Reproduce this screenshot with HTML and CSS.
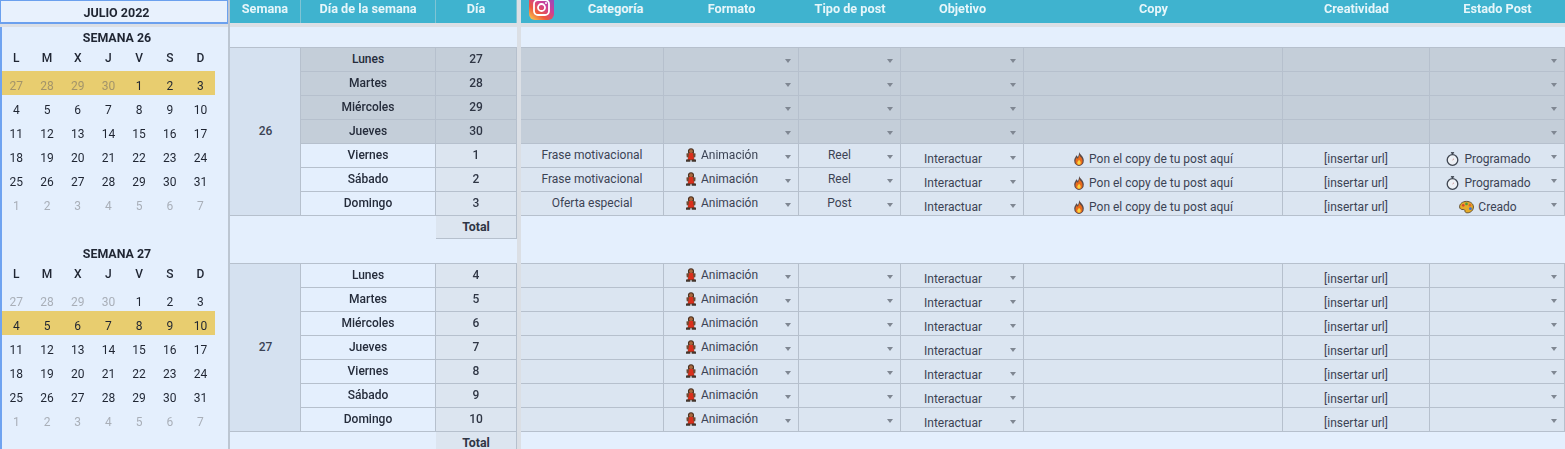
FILE: index.html
```html
<!DOCTYPE html>
<html lang="es">
<head>
<meta charset="utf-8">
<title>Calendario de contenidos</title>
<link rel="stylesheet" href="styles.css">
</head>
<body>
<svg class="defs" width="0" height="0" aria-hidden="true">
  <defs>
    <linearGradient id="ig" x1="0.1" y1="1" x2="0.9" y2="0">
      <stop offset="0" stop-color="#f9c64f"/><stop offset="0.3" stop-color="#ee5a3c"/><stop offset="0.6" stop-color="#cf3f96"/><stop offset="1" stop-color="#8a4fc4"/>
    </linearGradient>
    <symbol id="dancer" viewBox="0 0 12 14">
      <path d="M3 4.200C2.500 1.500 4 .3 6 .3s3.500 1.200 3 3.900l-.2 1.300H3.200z" fill="#4b3020"/>
      <circle cx="6" cy="3.200" r="1.900" fill="#a9693f"/>
      <path d="M1.400 5.600L4 4.900h4l2.600.7-.3 3.600-1.500.2.900 2.800H2.300l.9-2.800-1.500-.2z" fill="#6e4a32"/>
      <path d="M4.100 5.100h3.800l.5 3.300 1 3.400H2.600l1-3.400z" fill="#d92f1c"/>
      <path d="M1 11.400h4.300v2.300H1zM6.700 11.400H11v2.300H6.700z" fill="#43352c"/>
    </symbol>
    <symbol id="fire" viewBox="1 0.300 10 13.400">
      <path d="M6 .4c.6 2.200 4.600 4 4.600 8.100A4.600 5 0 0 1 6 13.600a4.600 5 0 0 1-4.600-5.100C1.400 6 3 5 3.400 3.300c.9.500 1.400 1.200 1.500 2C5.700 4 6.200 2.300 6 .4z" fill="#5a4a48"/>
      <path d="M6 3c.6 1.700 3.400 3 3.400 5.800A3.400 3.800 0 0 1 6 12.700a3.400 3.800 0 0 1-3.400-3.900C2.600 7.400 3.400 6.500 3.800 5.500c.5.500.9 1 1 1.600C5.500 6 6.100 4.500 6 3z" fill="#ea6a1c"/>
      <path d="M6 7.600c.5.800 1.700 1.500 1.700 2.900A1.700 2 0 0 1 6 12.500a1.700 2 0 0 1-1.700-2c0-1.200 1.300-1.700 1.700-2.900z" fill="#fbd33f"/>
    </symbol>
    <symbol id="watch" viewBox="0 0 14 14">
      <path d="M5.400.8h3.200" stroke="#3f4651" stroke-width="1.400" fill="none"/>
      <path d="M7 1v2" stroke="#3f4651" stroke-width="1.200" fill="none"/>
      <circle cx="7" cy="8" r="5.300" fill="#eef1f5" stroke="#3f4651" stroke-width="1.300"/>
      <path d="M7 8l1.500-1.200" stroke="#c98a8a" stroke-width="0.900" fill="none"/>
    </symbol>
    <symbol id="palette" viewBox="0 0 16 14">
      <path d="M8 1C3.800 1 .6 3.600.6 6.800c0 2.300 2 3.100 3.800 2.900 1.300-.1 1.900.4 1.900 1.400 0 1.300 1 2.100 2.400 2.100 4 0 6.700-2.800 6.700-6.200C15.400 3.500 12.200 1 8 1z" fill="#e5ab28" stroke="#4f3f22" stroke-width="0.900"/>
      <circle cx="4.500" cy="5.200" r="1.400" fill="#d8472b"/>
      <circle cx="8" cy="3.700" r="1.400" fill="#4c9a3f"/>
      <circle cx="11.700" cy="5" r="1.400" fill="#e06a2a"/>
      <circle cx="12.200" cy="8.800" r="1.500" fill="#3f6fc4"/>
    </symbol>
  </defs>
</svg>
<div class="page">
  <aside class="cal">
    <div class="cal-head">JULIO 2022</div>
    <div class="band"></div>
    <section class="month">
      <h2 class="week-title">SEMANA 26</h2>
      <div class="week letters"><span>L</span><span>M</span><span>X</span><span>J</span><span>V</span><span>S</span><span>D</span></div>
      <div class="week hl"><span class="mute">27</span><span class="mute">28</span><span class="mute">29</span><span class="mute">30</span><span>1</span><span>2</span><span>3</span></div>
      <div class="week"><span>4</span><span>5</span><span>6</span><span>7</span><span>8</span><span>9</span><span>10</span></div>
      <div class="week"><span>11</span><span>12</span><span>13</span><span>14</span><span>15</span><span>16</span><span>17</span></div>
      <div class="week"><span>18</span><span>19</span><span>20</span><span>21</span><span>22</span><span>23</span><span>24</span></div>
      <div class="week"><span>25</span><span>26</span><span>27</span><span>28</span><span>29</span><span>30</span><span>31</span></div>
      <div class="week"><span class="mute">1</span><span class="mute">2</span><span class="mute">3</span><span class="mute">4</span><span class="mute">5</span><span class="mute">6</span><span class="mute">7</span></div>
    </section>
    <section class="month second">
      <h2 class="week-title">SEMANA 27</h2>
      <div class="week letters"><span>L</span><span>M</span><span>X</span><span>J</span><span>V</span><span>S</span><span>D</span></div>
      <div class="week"><span class="mute">27</span><span class="mute">28</span><span class="mute">29</span><span class="mute">30</span><span>1</span><span>2</span><span>3</span></div>
      <div class="week hl"><span>4</span><span>5</span><span>6</span><span>7</span><span>8</span><span>9</span><span>10</span></div>
      <div class="week"><span>11</span><span>12</span><span>13</span><span>14</span><span>15</span><span>16</span><span>17</span></div>
      <div class="week"><span>18</span><span>19</span><span>20</span><span>21</span><span>22</span><span>23</span><span>24</span></div>
      <div class="week"><span>25</span><span>26</span><span>27</span><span>28</span><span>29</span><span>30</span><span>31</span></div>
      <div class="week"><span class="mute">1</span><span class="mute">2</span><span class="mute">3</span><span class="mute">4</span><span class="mute">5</span><span class="mute">6</span><span class="mute">7</span></div>
    </section>
  </aside>

  <table class="grid mid">
    <colgroup><col class="c-sem"><col class="c-dow"><col class="c-day"></colgroup>
    <thead>
      <tr class="head"><th>Semana</th><th>Día de la semana</th><th>Día</th></tr>
      <tr class="sep"><td colspan="3"></td></tr>
    </thead>
    <tbody>
      <tr class="blank"><td colspan="3"></td></tr>
      <tr class="past"><td class="wk" rowspan="7">26</td><td class="dow">Lunes</td><td class="num">27</td></tr>
      <tr class="past"><td class="dow">Martes</td><td class="num">28</td></tr>
      <tr class="past"><td class="dow">Miércoles</td><td class="num">29</td></tr>
      <tr class="past"><td class="dow">Jueves</td><td class="num">30</td></tr>
      <tr><td class="dow">Viernes</td><td class="num">1</td></tr>
      <tr><td class="dow">Sábado</td><td class="num">2</td></tr>
      <tr><td class="dow">Domingo</td><td class="num">3</td></tr>
      <tr><td class="empty" colspan="2"></td><td class="num total">Total</td></tr>
      <tr><td class="empty lined" colspan="3"></td></tr>
      <tr><td class="wk" rowspan="7">27</td><td class="dow">Lunes</td><td class="num">4</td></tr>
      <tr><td class="dow">Martes</td><td class="num">5</td></tr>
      <tr><td class="dow">Miércoles</td><td class="num">6</td></tr>
      <tr><td class="dow">Jueves</td><td class="num">7</td></tr>
      <tr><td class="dow">Viernes</td><td class="num">8</td></tr>
      <tr><td class="dow">Sábado</td><td class="num">9</td></tr>
      <tr><td class="dow">Domingo</td><td class="num">10</td></tr>
      <tr><td class="empty" colspan="2"></td><td class="num total">Total</td></tr>
    </tbody>
  </table>

  <div class="gutter"></div>

  <table class="grid posts">
    <colgroup><col class="c-cat"><col class="c-fmt"><col class="c-tipo"><col class="c-obj"><col class="c-copy"><col class="c-crea"><col class="c-est"></colgroup>
    <thead>
      <tr class="head">
        <th class="th-cat">
          <svg class="ig" viewBox="0 0 25 25" aria-hidden="true">
            <rect width="25" height="25" rx="6" fill="url(#ig)"/>
            <rect x="5" y="5" width="15" height="15" rx="4" fill="none" stroke="#fff" stroke-width="1.800"/>
            <circle cx="12.500" cy="12.500" r="3.500" fill="none" stroke="#fff" stroke-width="1.800"/>
            <circle cx="17" cy="8" r="1" fill="#fff"/>
          </svg>
          Categoría
        </th>
        <th>Formato</th><th>Tipo de post</th><th>Objetivo</th><th>Copy</th><th>Creatividad</th><th>Estado Post</th>
      </tr>
      <tr class="sep"><td colspan="7"></td></tr>
    </thead>
    <tbody>
      <tr class="blank"><td colspan="7"></td></tr>
      <tr class="past"><td></td><td class="dd fmt"><i class="arrow"></i></td><td class="dd tipo"><i class="arrow"></i></td><td class="dd obj"><i class="arrow"></i></td><td></td><td></td><td class="dd est"><i class="arrow"></i></td></tr>
      <tr class="past"><td></td><td class="dd fmt"><i class="arrow"></i></td><td class="dd tipo"><i class="arrow"></i></td><td class="dd obj"><i class="arrow"></i></td><td></td><td></td><td class="dd est"><i class="arrow"></i></td></tr>
      <tr class="past"><td></td><td class="dd fmt"><i class="arrow"></i></td><td class="dd tipo"><i class="arrow"></i></td><td class="dd obj"><i class="arrow"></i></td><td></td><td></td><td class="dd est"><i class="arrow"></i></td></tr>
      <tr class="past"><td></td><td class="dd fmt"><i class="arrow"></i></td><td class="dd tipo"><i class="arrow"></i></td><td class="dd obj"><i class="arrow"></i></td><td></td><td></td><td class="dd est"><i class="arrow"></i></td></tr>
      <tr class="filled"><td>Frase motivacional</td><td class="dd fmt"><svg class="emo"><use href="#dancer"/></svg>Animación<i class="arrow"></i></td><td class="dd tipo">Reel<i class="arrow"></i></td><td class="dd obj low">Interactuar<i class="arrow"></i></td><td class="low"><svg class="emo"><use href="#fire"/></svg>Pon el copy de tu post aquí</td><td class="low">[insertar url]</td><td class="dd est low"><svg class="emo wide"><use href="#watch"/></svg>Programado<i class="arrow"></i></td></tr>
      <tr class="filled"><td>Frase motivacional</td><td class="dd fmt"><svg class="emo"><use href="#dancer"/></svg>Animación<i class="arrow"></i></td><td class="dd tipo">Reel<i class="arrow"></i></td><td class="dd obj low">Interactuar<i class="arrow"></i></td><td class="low"><svg class="emo"><use href="#fire"/></svg>Pon el copy de tu post aquí</td><td class="low">[insertar url]</td><td class="dd est low"><svg class="emo wide"><use href="#watch"/></svg>Programado<i class="arrow"></i></td></tr>
      <tr class="filled"><td>Oferta especial</td><td class="dd fmt"><svg class="emo"><use href="#dancer"/></svg>Animación<i class="arrow"></i></td><td class="dd tipo">Post<i class="arrow"></i></td><td class="dd obj low">Interactuar<i class="arrow"></i></td><td class="low"><svg class="emo"><use href="#fire"/></svg>Pon el copy de tu post aquí</td><td class="low">[insertar url]</td><td class="dd est low"><svg class="emo wide"><use href="#palette"/></svg>Creado<i class="arrow"></i></td></tr>
      <tr class="gap-row"><td colspan="7"></td></tr>
      <tr class="filled"><td></td><td class="dd fmt"><svg class="emo"><use href="#dancer"/></svg>Animación<i class="arrow"></i></td><td class="dd tipo"><i class="arrow"></i></td><td class="dd obj low">Interactuar<i class="arrow"></i></td><td></td><td class="low">[insertar url]</td><td class="dd est"><i class="arrow"></i></td></tr>
      <tr class="filled"><td></td><td class="dd fmt"><svg class="emo"><use href="#dancer"/></svg>Animación<i class="arrow"></i></td><td class="dd tipo"><i class="arrow"></i></td><td class="dd obj low">Interactuar<i class="arrow"></i></td><td></td><td class="low">[insertar url]</td><td class="dd est"><i class="arrow"></i></td></tr>
      <tr class="filled"><td></td><td class="dd fmt"><svg class="emo"><use href="#dancer"/></svg>Animación<i class="arrow"></i></td><td class="dd tipo"><i class="arrow"></i></td><td class="dd obj low">Interactuar<i class="arrow"></i></td><td></td><td class="low">[insertar url]</td><td class="dd est"><i class="arrow"></i></td></tr>
      <tr class="filled"><td></td><td class="dd fmt"><svg class="emo"><use href="#dancer"/></svg>Animación<i class="arrow"></i></td><td class="dd tipo"><i class="arrow"></i></td><td class="dd obj low">Interactuar<i class="arrow"></i></td><td></td><td class="low">[insertar url]</td><td class="dd est"><i class="arrow"></i></td></tr>
      <tr class="filled"><td></td><td class="dd fmt"><svg class="emo"><use href="#dancer"/></svg>Animación<i class="arrow"></i></td><td class="dd tipo"><i class="arrow"></i></td><td class="dd obj low">Interactuar<i class="arrow"></i></td><td></td><td class="low">[insertar url]</td><td class="dd est"><i class="arrow"></i></td></tr>
      <tr class="filled"><td></td><td class="dd fmt"><svg class="emo"><use href="#dancer"/></svg>Animación<i class="arrow"></i></td><td class="dd tipo"><i class="arrow"></i></td><td class="dd obj low">Interactuar<i class="arrow"></i></td><td></td><td class="low">[insertar url]</td><td class="dd est"><i class="arrow"></i></td></tr>
      <tr class="filled"><td></td><td class="dd fmt"><svg class="emo"><use href="#dancer"/></svg>Animación<i class="arrow"></i></td><td class="dd tipo"><i class="arrow"></i></td><td class="dd obj low">Interactuar<i class="arrow"></i></td><td></td><td class="low">[insertar url]</td><td class="dd est"><i class="arrow"></i></td></tr>
      <tr class="tail"><td colspan="7"></td></tr>
    </tbody>
  </table>
</div>
</body>
</html>
```

FILE: styles.css
```css
html, body {
  margin: 0;
  height: 449px;
  overflow: hidden;
  background: #e4effd;
}

.defs {
  position: absolute;
}

.page {
  display: flex;
  align-items: flex-start;
  width: 1565px;
  height: 449px;
  overflow: hidden;
  font: 400 12px/14px Roboto, "Liberation Sans", sans-serif;
  color: #3b4354;
  filter: blur(0.45px);
}

/* calendar column */
.cal {
  flex: none;
  box-sizing: border-box;
  width: 230px;
  height: 449px;
  border-right: 2px solid #bcc6d2;
  color: #1f2532;
}

.cal-head {
  box-sizing: border-box;
  height: 24px;
  padding: 5px 0 0 5px;
  border: 1px solid #6ba0ee;
  border-bottom-width: 2px;
  background: #e8f1fd;
  font-size: 12.5px;
  font-weight: 700;
  text-align: center;
}

.band {
  height: 3px;
  background: #dbdfe5;
}

.month {
  border-left: 2px solid #6fa3f0;
  height: 188px;
  padding-bottom: 28px;
}

.month.second {
  height: 200px;
  padding-bottom: 18px;
}

.week-title {
  margin: 0;
  height: 20px;
  padding-top: 4px;
  box-sizing: border-box;
  font: 700 12.4px/14px Roboto, "Liberation Sans", sans-serif;
  text-align: center;
  transform: translateX(2px);
}

.week {
  display: grid;
  grid-template-columns: repeat(7, 30.7px);
  width: 213px;
  height: 24px;
  padding-top: 8px;
  box-sizing: border-box;
}

.week span {
  margin-left: -2px;
  text-align: center;
}

.letters {
  padding-top: 4px;
  font-weight: 500;
}

.hl {
  background: #e8cd6f;
}

.mute {
  color: #a9afb8;
}

.hl .mute {
  color: #a3946a;
}

/* tables */
.grid {
  flex: none;
  table-layout: fixed;
  border-collapse: separate;
  border-spacing: 0;
}

.mid { width: 287px; }
.posts { width: 1044px; }

.c-sem { width: 71px; }
.c-dow { width: 135px; }
.c-day { width: 81px; }
.c-cat { width: 143px; }
.c-fmt { width: 135px; }
.c-tipo { width: 102px; }
.c-obj { width: 123px; }
.c-copy { width: 259px; }
.c-crea { width: 147px; }
.c-est { width: 135px; }

.grid th, .grid td {
  box-sizing: border-box;
  padding: 0;
  text-align: center;
  vertical-align: top;
}

.grid td {
  height: 24px;
  padding-top: 4px;
  border-top: 1px solid #b6c0cd;
  border-right: 1px solid #b6c0cd;
  position: relative;
  white-space: nowrap;
}

.grid .head th {
  height: 23px;
  padding-top: 2px;
  background: #3fb3cf;
  color: #e6f6fa;
  font-size: 12.7px;
  font-weight: 700;
}

.mid .head th {
  border-right: 1px solid #7fc4d4;
}

.grid .sep td {
  height: 4px;
  padding: 0;
  border: 0;
  background: #dbdfe5;
}

.grid .blank td {
  height: 20px;
  padding: 0;
  border: 0;
}

/* week table */
.grid td.wk,
.past td.wk {
  background: #d5e1f0;
  vertical-align: middle;
  padding: 0 0 2px 1px;
  font-weight: 500;
}

.dow {
  font-weight: 500;
  color: #252c3b;
}

.grid td.num {
  background: #dce5f0;
  font-weight: 500;
  color: #2f3645;
}

.past td {
  background: #c4ced9;
}

.grid .past td.num {
  background: #c4ced9;
}

.grid td.total {
  font-size: 12.4px;
  font-weight: 700;
}

.grid td.empty {
  border-right: 0;
  background: #e4effd;
}

.grid td.num.total {
  border-bottom: 1px solid #b6c0cd;
}

.grid td.lined {
  border-top: 0;
}

.filled td {
  background: #dbe5f1;
}

.grid .gap-row td {
  height: 48px;
  padding: 0;
  border-right: 0;
}

.grid .tail td {
  border-right: 0;
}

/* dropdown cells */
.grid td.fmt { padding-right: 19px; }
.grid td.tipo { padding-right: 20px; }
.grid td.obj { padding-right: 18px; }
.grid td.est { padding-right: 18px; }

.grid td.low {
  padding-top: 8px;
}

.arrow {
  position: absolute;
  top: 11px;
  right: 7px;
  width: 0;
  height: 0;
  border-left: 3.5px solid transparent;
  border-right: 3.5px solid transparent;
  border-top: 4px solid #7f8792;
}

.filled .obj .arrow { top: 12px; }

.emo {
  width: 12px;
  height: 14px;
  margin-right: 4px;
  vertical-align: -3px;
}

.emo.wide {
  width: 15px;
}

/* instagram header */
.grid .th-cat {
  position: relative;
  padding-left: 46px;
}

.ig {
  position: absolute;
  left: 8px;
  top: -5px;
  width: 25px;
  height: 25px;
}

.gutter {
  flex: none;
  width: 4px;
  height: 449px;
  background: #dbdfe5;
}
```
